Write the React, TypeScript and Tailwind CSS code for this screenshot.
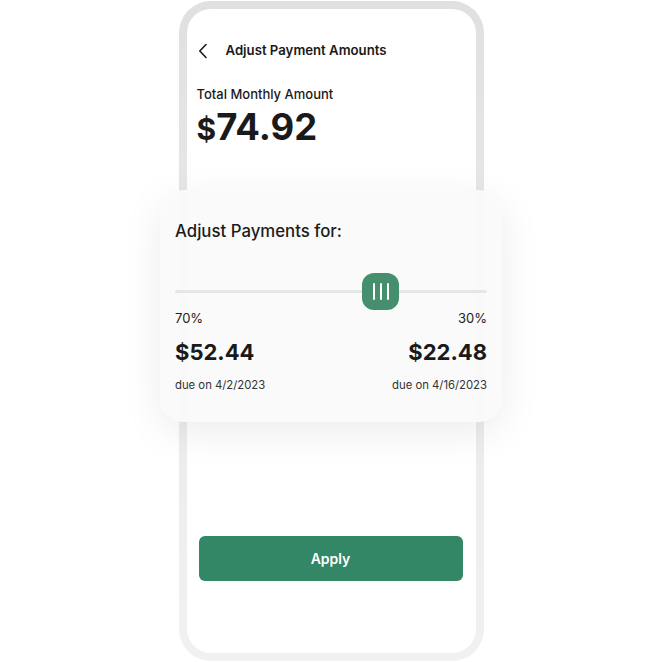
function Slider() {
  return (
    <div className="relative mt-[31px] h-[37px] flex items-center">
      <div className="h-[3px] w-full rounded-full bg-[#e6e6e6]" />
      <div className="absolute left-[187px] top-0 w-[37px] h-[37px] rounded-[12px] bg-[#458f6f] flex items-center justify-center gap-[5px]">
        <span className="w-[2px] h-[17px] bg-white rounded-full" />
        <span className="w-[2px] h-[17px] bg-white rounded-full" />
        <span className="w-[2px] h-[17px] bg-white rounded-full" />
      </div>
    </div>
  );
}

function PaymentCard() {
  return (
    <div className="absolute left-[160px] top-[190px] w-[342px] h-[232px] rounded-[24px] bg-[#fafafa]/95 shadow-[0_10px_40px_rgba(0,0,0,0.08)] px-[15px] pt-[30px]">
      <p className="text-[16.8px] leading-[22px] font-medium text-[#1c1c1c]">Adjust Payments for:</p>
      <Slider />
      <div className="flex justify-between text-[13px] leading-[16px] text-[#222]">
        <span>70%</span>
        <span>30%</span>
      </div>
      <div className="mt-[14px] flex justify-between text-[22px] leading-[24px] font-bold text-[#1a1a1a]">
        <span>$52.44</span>
        <span>$22.48</span>
      </div>
      <div className="mt-[13px] flex justify-between text-[11.3px] leading-[16px] text-[#333]">
        <span>due on 4/2/2023</span>
        <span>due on 4/16/2023</span>
      </div>
    </div>
  );
}

export default function App() {
  return (
    <div className="relative w-[662px] h-[662px] bg-white overflow-hidden" style={{ fontFamily: 'Inter, "Noto Sans", sans-serif' }}>
      <div className="flex justify-center pt-[1px]">
        <div className="w-[305px] h-[660px] rounded-[32px] p-[8px] bg-gradient-to-b from-[#e0e0e0] via-[#ebebeb] to-[#f1f1f1]">
          <div className="h-full rounded-[24px] bg-white flex flex-col px-[10px] pt-[27px]">
            <div className="flex items-center h-[30px]">
              <svg width="10" height="16" viewBox="0 0 10 16" fill="none" className="ml-[1px]">
                <path d="M8 1.5 L1.8 8 L8 14.5" stroke="#1a1a1a" strokeWidth="1.6" strokeLinecap="round" strokeLinejoin="round" />
              </svg>
              <span className="ml-[18px] text-[13.2px] font-semibold text-[#1a1a1a]">Adjust Payment Amounts</span>
            </div>
            <p className="mt-[19px] text-[13px] leading-[18px] font-medium text-[#1a1a1a]">Total Monthly Amount</p>
            <p className="mt-[5px] leading-[38px] font-bold text-[#1a1a1a] flex items-baseline">
              <span className="text-[30px]">$</span>
              <span className="text-[36.5px]">74.92</span>
            </p>
            <div className="flex-1" />
            <button className="mb-[72px] ml-[2px] w-[264px] h-[45px] rounded-[6px] bg-[#338766] text-white text-[14px] font-semibold">
              Apply
            </button>
          </div>
        </div>
      </div>
      <PaymentCard />
    </div>
  );
}
